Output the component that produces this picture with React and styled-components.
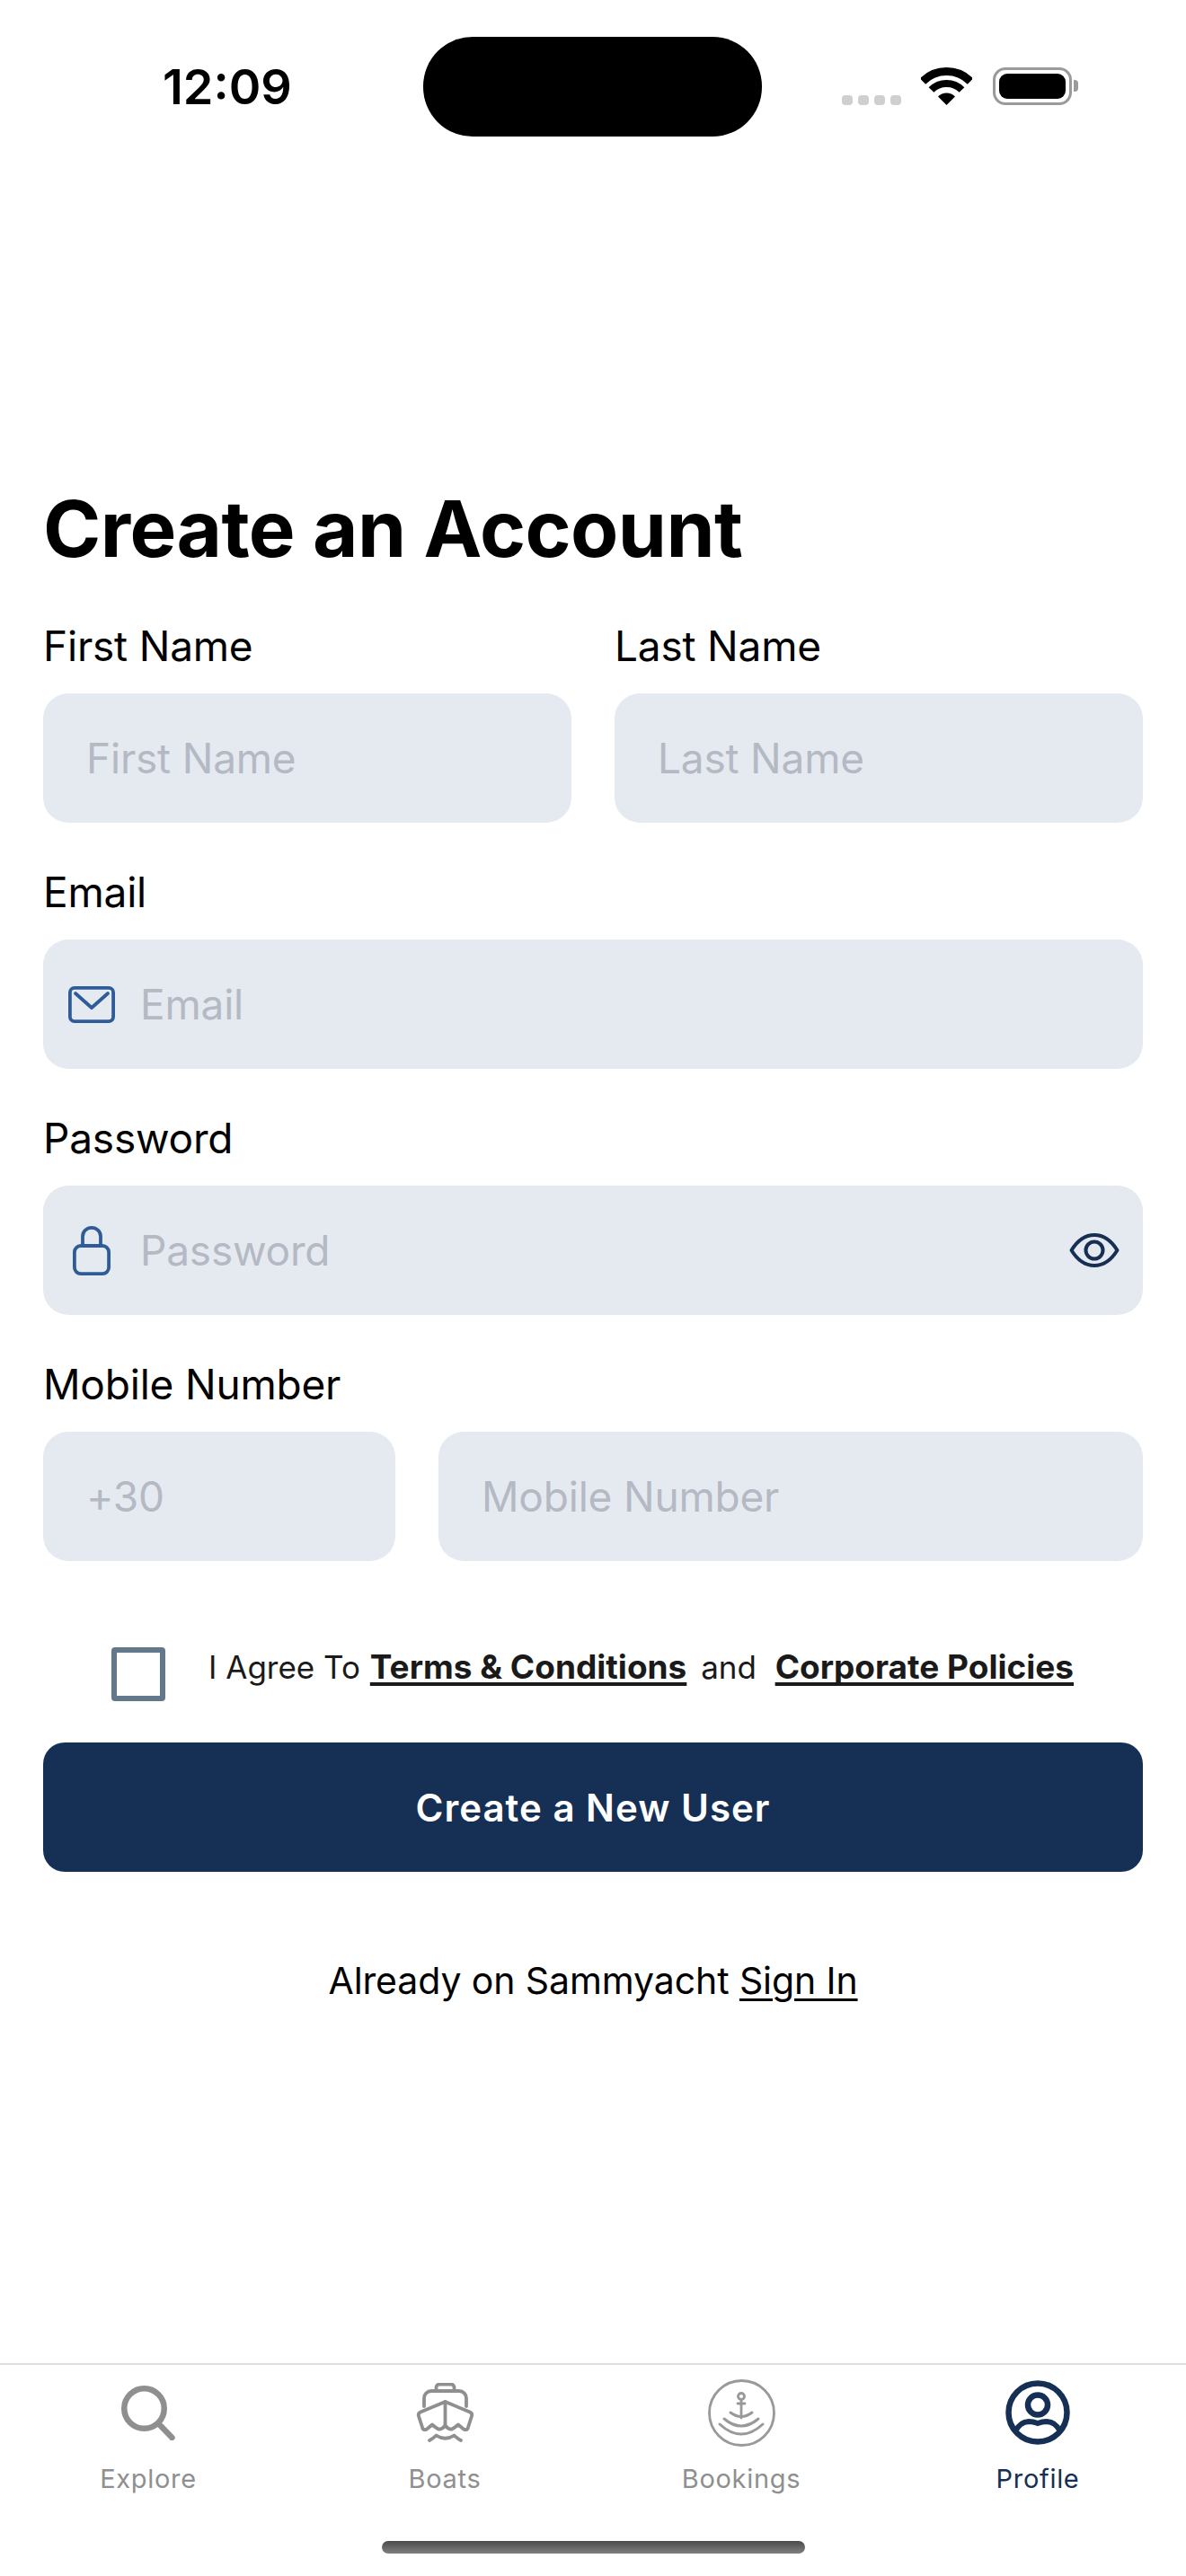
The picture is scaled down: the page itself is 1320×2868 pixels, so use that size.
import React from "react";
import styled, { createGlobalStyle } from "styled-components";

const GlobalStyle = createGlobalStyle`
  * { box-sizing: border-box; }
  body { margin: 0; background: #fff; font-family: Inter, "Liberation Sans", sans-serif; }
`;

const Page = styled.div`
  width: 1320px;
  height: 2868px;
  display: flex;
  flex-direction: column;
  background: #fff;
  overflow: hidden;
`;

const StatusBar = styled.div`
  display: flex;
  align-items: flex-start;
  padding: 41px 0 0 181px;
`;

const Time = styled.div`
  width: 290px;
  margin-top: 24px;
  font-size: 54px;
  line-height: 64px;
  font-weight: 600;
  color: #000;
`;

const Island = styled.div`
  width: 377px;
  height: 111px;
  border-radius: 55px;
  background: #000;
`;

const Indicators = styled.div`
  display: flex;
  align-items: flex-end;
  height: 42px;
  margin: 34px 0 0 89px;
`;

const Dots = styled.div`
  display: flex;
  gap: 6px;
  margin-right: 22px;
`;

const Dot = styled.span`
  width: 12px;
  height: 11px;
  border-radius: 4px;
  background: #cfcfcf;
`;

const Battery = styled.div`
  position: relative;
  width: 88px;
  height: 42px;
  margin-left: 23px;
  padding: 4px;
  border: 3.5px solid #9a9a9a;
  border-radius: 14px;

  &::after {
    content: "";
    position: absolute;
    right: -10px;
    top: 11px;
    width: 5px;
    height: 13px;
    border-radius: 0 4px 4px 0;
    background: #9a9a9a;
  }
`;

const BatteryFill = styled.div`
  width: 100%;
  height: 100%;
  border-radius: 9px;
  background: #000;
`;

const Form = styled.main`
  display: flex;
  flex-direction: column;
  padding: 385px 48px 0;
`;

const Title = styled.h1`
  margin: 0 0 49px;
  font-size: 87px;
  line-height: 104px;
  font-weight: 700;
  letter-spacing: -0.6px;
  color: #000;
`;

const Row = styled.div`
  display: grid;
  grid-template-columns: ${(p) => p.$columns || "1fr 1fr"};
  gap: 48px;
`;

const Group = styled.div`
  margin-bottom: ${(p) => (p.$last ? "0" : "48px")};
`;

const Label = styled.div`
  margin-bottom: 24px;
  font-size: 46px;
  line-height: 58px;
  letter-spacing: -0.2px;
  color: #000;
`;

const Field = styled.div`
  display: flex;
  align-items: center;
  height: 144px;
  padding: 0 26px 0 ${(p) => (p.$withIcon ? "28px" : "48px")};
  border-radius: 28px;
  background: #e5eaf1;
`;

const IconSlot = styled.span`
  display: flex;
  justify-content: center;
  width: 52px;
  margin-right: 28px;
`;

const Placeholder = styled.span`
  flex: 1;
  font-size: 46px;
  letter-spacing: -0.2px;
  color: #b4b9c4;
`;

const Agree = styled.div`
  display: flex;
  align-items: flex-start;
  margin: 96px 0 46px;
  padding-left: 76px;
`;

const Checkbox = styled.div`
  width: 60px;
  height: 60px;
  margin-right: 48px;
  border: 6px solid #64788c;
  border-radius: 4px;
`;

const AgreeText = styled.div`
  font-size: 35px;
  line-height: 44px;
  color: #1a1a1a;
  white-space: pre;
`;

const Strong = styled.a`
  margin-left: 1px;
  margin-right: ${(p) => p.$after || "0"};
  font-size: 37px;
  font-weight: 700;
  text-decoration: underline;
  text-decoration-thickness: 3.500px;
  text-decoration-skip-ink: none;
  text-underline-offset: 4px;
`;

const Submit = styled.button`
  height: 144px;
  border: 0;
  border-radius: 24px;
  background: #152f55;
  color: #fff;
  font-family: inherit;
  font-size: 42px;
  font-weight: 600;
  letter-spacing: 1px;
`;

const SignIn = styled.div`
  margin-top: 91px;
  text-align: center;
  font-size: 41px;
  line-height: 60px;
  letter-spacing: -0.1px;
  color: #000;
`;

const SignInLink = styled.a`
  text-decoration: underline;
  text-decoration-thickness: 2.500px;
  text-underline-offset: 5px;
`;

const TabBar = styled.nav`
  margin-top: auto;
  border-top: 2px solid #dedede;
  padding-top: 15px;
`;

const Tabs = styled.div`
  display: grid;
  grid-template-columns: repeat(4, 1fr);
`;

const Tab = styled.div`
  display: flex;
  flex-direction: column;
  align-items: center;
  color: ${(p) => (p.$active ? "#152f55" : "#8f8f8f")};
`;

const TabIcon = styled.div`
  display: flex;
  align-items: center;
  justify-content: center;
  height: 76px;
`;

const TabLabel = styled.div`
  margin-top: 18px;
  font-size: 29px;
  line-height: 36px;
  letter-spacing: 0.7px;
`;

const HomeBar = styled.div`
  width: 471px;
  height: 14px;
  margin: 51px auto 25px;
  border-radius: 7px;
  background: linear-gradient(#4a4a4a, #808080);
`;

const Wifi = () => (
  <svg width="57" height="42" viewBox="0 0 57 42" fill="none">
    <path d="M2 15.5A37.5 37.5 0 0 1 55 15.5" stroke="#000" strokeWidth="9" />
    <path d="M11.5 25A24 24 0 0 1 45.5 25" stroke="#000" strokeWidth="8" />
    <path d="M28.5 42L19 32.5A13.5 13.5 0 0 1 38 32.5Z" fill="#000" />
  </svg>
);

const MailIcon = () => (
  <svg width="52" height="41" viewBox="0 0 52 41" fill="none" stroke="#2f5c99" strokeWidth="3.8" strokeLinecap="round" strokeLinejoin="round">
    <rect x="1.9" y="1.9" width="48.2" height="37.2" rx="5" />
    <path d="M8 8L26 24L44 8" />
  </svg>
);

const LockIcon = () => (
  <svg width="42" height="55" viewBox="0 0 42 55" fill="none" stroke="#2f5c99" strokeWidth="3.8" strokeLinejoin="round">
    <rect x="1.9" y="22" width="38.2" height="31.1" rx="7" />
    <path d="M11 22V11.5a10 9.600 0 0 1 20 0V22" />
  </svg>
);

const EyeIcon = () => (
  <svg width="56" height="38" viewBox="0 0 56 38" fill="none" stroke="#152f55" strokeWidth="4">
    <path d="M2.5 19C9 8.5 18 2 28 2s19 6.500 25.500 17C47 29.500 38 36 28 36S9 29.500 2.500 19Z" strokeLinejoin="round" />
    <circle cx="28" cy="19" r="9.500" />
  </svg>
);

const SearchIcon = () => (
  <svg width="60" height="61" viewBox="0 0 60 61" fill="none" stroke="currentColor" strokeWidth="6.500" strokeLinecap="round">
    <circle cx="25.500" cy="25.500" r="22.250" />
    <path d="M43 44L56.500 58" />
  </svg>
);

const BoatIcon = () => (
  <svg width="65" height="66" viewBox="0 0 65 66" fill="none" stroke="currentColor" strokeWidth="3.800" strokeLinecap="round" strokeLinejoin="round">
    <path d="M22.500 9V5a3.500 3.500 0 0 1 3.500-3.500h13a3.500 3.500 0 0 1 3.500 3.500V9" />
    <path d="M9 26V17a8 8 0 0 1 8-8h31a8 8 0 0 1 8 8V26" />
    <path d="M32.500 21L60 32.500Q63 34 62 37L57.500 51Q56 53 53 51.500L47 46.500Q43 50 40 51.500Q36 52 32.500 47.500Q29 52 25 51.500Q22 50 18 46.500L12 51.500Q9 53 7.500 51L3 37Q2 34 5 32.500Z" />
    <path d="M32.500 21V48" />
    <path d="M15 64Q19 62 22.500 58.500Q32.500 65 42.500 58.500Q46 62 50 64" />
  </svg>
);

const AnchorIcon = () => (
  <svg width="75" height="75" viewBox="0 0 75 75" fill="none" stroke="#999" strokeWidth="2.800" strokeLinecap="round">
    <circle cx="37.500" cy="37.500" r="36" />
    <circle cx="37" cy="19" r="3.500" />
    <path d="M37 22.500V43M33 27H41" />
    <path d="M25 37Q37 46 49 37" strokeWidth="3" />
    <path d="M18 44Q37 60 56 44" strokeWidth="3" />
    <path d="M13 50Q37 72 61 50" strokeWidth="3" />
  </svg>
);

const ProfileIcon = () => (
  <svg width="72" height="74" viewBox="0 0 72 74" fill="none" stroke="currentColor" strokeWidth="6.500">
    <circle cx="36" cy="37" r="32.500" />
    <circle cx="36" cy="28.500" r="11" />
    <path d="M11 58Q16 47.500 26 47Q31 47 36 49Q41 47 46 47Q56 47.500 61 58" strokeWidth="6" />
  </svg>
);

const App = () => {
  return (
    <Page>
      <GlobalStyle />
      <StatusBar>
        <Time>12:09</Time>
        <Island />
        <Indicators>
          <Dots>
            <Dot />
            <Dot />
            <Dot />
            <Dot />
          </Dots>
          <Wifi />
          <Battery>
            <BatteryFill />
          </Battery>
        </Indicators>
      </StatusBar>

      <Form>
        <Title>Create an Account</Title>
        <Group>
          <Row>
            <div>
              <Label>First Name</Label>
              <Field>
                <Placeholder>First Name</Placeholder>
              </Field>
            </div>
            <div>
              <Label>Last Name</Label>
              <Field>
                <Placeholder>Last Name</Placeholder>
              </Field>
            </div>
          </Row>
        </Group>
        <Group>
          <Label>Email</Label>
          <Field $withIcon>
            <IconSlot>
              <MailIcon />
            </IconSlot>
            <Placeholder>Email</Placeholder>
          </Field>
        </Group>
        <Group>
          <Label>Password</Label>
          <Field $withIcon>
            <IconSlot>
              <LockIcon />
            </IconSlot>
            <Placeholder>Password</Placeholder>
            <EyeIcon />
          </Field>
        </Group>
        <Group $last>
          <Label>Mobile Number</Label>
          <Row $columns="392px 1fr">
            <Field>
              <Placeholder>+30</Placeholder>
            </Field>
            <Field>
              <Placeholder>Mobile Number</Placeholder>
            </Field>
          </Row>
        </Group>

        <Agree>
          <Checkbox />
          <AgreeText>
            I Agree To <Strong $after="6px">Terms &amp; Conditions</Strong> and  <Strong>Corporate Policies</Strong>
          </AgreeText>
        </Agree>

        <Submit>Create a New User</Submit>

        <SignIn>
          Already on Sammyacht <SignInLink>Sign In</SignInLink>
        </SignIn>
      </Form>

      <TabBar>
        <Tabs>
          <Tab>
            <TabIcon>
              <SearchIcon />
            </TabIcon>
            <TabLabel>Explore</TabLabel>
          </Tab>
          <Tab>
            <TabIcon>
              <BoatIcon />
            </TabIcon>
            <TabLabel>Boats</TabLabel>
          </Tab>
          <Tab>
            <TabIcon>
              <AnchorIcon />
            </TabIcon>
            <TabLabel>Bookings</TabLabel>
          </Tab>
          <Tab $active>
            <TabIcon>
              <ProfileIcon />
            </TabIcon>
            <TabLabel>Profile</TabLabel>
          </Tab>
        </Tabs>
        <HomeBar />
      </TabBar>
    </Page>
  );
};

export default App;
